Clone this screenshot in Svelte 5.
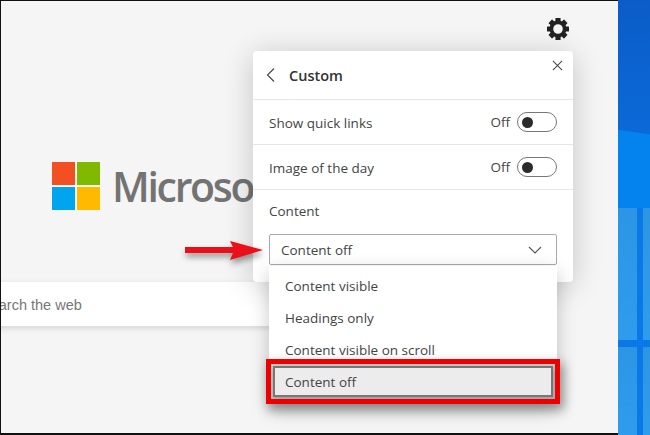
<script>
    const toggles = ["Show quick links", "Image of the day"];
    const options = ["Content visible", "Headings only", "Content visible on scroll", "Content off"];
    const teeth = [0, 45, 90, 135, 180, 225, 270, 315];
</script>

<div class="screen">
    <main class="browser">
        <div class="topbar">
            <svg class="gear" viewBox="0 0 24 24" width="24" height="24" aria-label="Settings">
                {#each teeth as angle}
                    <rect x="9.4" y="1" width="5.2" height="5" rx="0.6" fill="#222" transform="rotate({angle} 12 12)" />
                {/each}
                <circle cx="12" cy="12" r="6.6" fill="none" stroke="#222" stroke-width="3.6" />
            </svg>
        </div>

        <div class="brand">
            <div class="logo">
                <span class="red"></span>
                <span class="green"></span>
                <span class="blue"></span>
                <span class="yellow"></span>
            </div>
            <span class="wordmark">Microsoft</span>
        </div>

        <div class="search">Search the web</div>

        <section class="panel">
            <header>
                <svg class="back" viewBox="0 0 10 16" width="10" height="16">
                    <path d="M8 1.5 L1.5 8 L8 14.5" fill="none" stroke="#444" stroke-width="1.1" />
                </svg>
                <h2>Custom</h2>
                <svg class="close" viewBox="0 0 12 12" width="11" height="11">
                    <path d="M1 1 L11 11 M11 1 L1 11" stroke="#444" stroke-width="1.1" />
                </svg>
            </header>
            {#each toggles as label}
                <div class="row">
                    <span class="label">{label}</span>
                    <span class="state">Off</span>
                    <span class="switch"><i></i></span>
                </div>
            {/each}
            <div class="content">
                <div class="content-label">Content</div>
                <div class="select">
                    <span>Content off</span>
                    <svg viewBox="0 0 14 8" width="14" height="8">
                        <path d="M1 1 L7 7 L13 1" fill="none" stroke="#555" stroke-width="1.1" />
                    </svg>
                </div>
            </div>
        </section>

        <ul class="menu">
            {#each options as option, i}
                <li class:selected={i === options.length - 1}>{option}</li>
            {/each}
        </ul>

        <svg class="arrow" viewBox="0 0 80 28" width="80" height="28">
            <path d="M1 11 H49 L46 5 L79 14 L46 24 L49 17 H1 Z" fill="#ea0f18" />
        </svg>
    </main>

    <aside class="wallpaper">
        <div class="sky"></div>
        <div class="panes">
            <span></span><span></span>
            <span></span><span></span>
        </div>
    </aside>
</div>

<style>
    :global(body) {
        margin: 0;
        overflow: hidden;
    }

    .screen {
        display: flex;
        width: 650px;
        height: 435px;
        font-family: "Open Sans", "Noto Sans", sans-serif;
        color: #444;
    }

    .browser {
        position: relative;
        flex: 1;
        display: flex;
        flex-direction: column;
        background: #f5f5f5;
        border-top: 1px solid #111;
        border-left: 1px solid #111;
        border-bottom: 2px solid #111;
        overflow: hidden;
    }

    .topbar {
        display: flex;
        justify-content: flex-end;
        padding: 16px 48px 0 0;
        height: 29px;
    }

    .brand {
        display: flex;
        align-items: center;
        gap: 12px;
        margin: 116px 0 0 51px;
    }

    .logo {
        display: grid;
        grid-template-columns: 23px 23px;
        grid-template-rows: 23px 23px;
        gap: 2px;
    }

    .red { background: #f25022; }
    .green { background: #7fba00; }
    .blue { background: #00a4ef; }
    .yellow { background: #ffb900; }

    .wordmark {
        font-size: 41px;
        font-weight: 600;
        letter-spacing: -2.3px;
        line-height: 48px;
        color: #737373;
        white-space: nowrap;
    }

    .search {
        margin: 72px 0 0 -20px;
        width: 516px;
        height: 44px;
        background: #fff;
        box-shadow: 0 2px 6px rgba(0, 0, 0, 0.14);
        font-family: "Liberation Sans", sans-serif;
        font-size: 14.5px;
        line-height: 46px;
        color: #777;
    }

    .panel {
        position: absolute;
        left: 252px;
        top: 50px;
        width: 320px;
        height: 231px;
        background: #fff;
        border-radius: 4px;
        box-shadow: 0 4px 30px rgba(0, 0, 0, 0.2);
    }

    .panel header {
        position: relative;
        display: flex;
        align-items: center;
        gap: 13px;
        height: 49px;
        padding-left: 13px;
        box-sizing: border-box;
        border-bottom: 1px solid #e6e6e6;
    }

    h2 {
        margin: 0;
        font-size: 14.5px;
        font-weight: 600;
        color: #333;
    }

    .close {
        position: absolute;
        right: 10px;
        top: 9px;
    }

    .row {
        display: flex;
        align-items: center;
        height: 44px;
        padding: 0 16px;
        border-bottom: 1px solid #e6e6e6;
        font-size: 13.5px;
    }

    .label {
        flex: 1;
        padding-top: 2px;
    }

    .state {
        margin-right: 7px;
    }

    .switch {
        display: flex;
        align-items: center;
        width: 40px;
        height: 20px;
        padding-left: 4px;
        box-sizing: border-box;
        border: 1px solid #777;
        border-radius: 10px;
    }

    .switch i {
        width: 11px;
        height: 11px;
        border-radius: 50%;
        background: #2b2b2b;
    }

    .content {
        padding: 11px 16px 0;
        font-size: 13.5px;
    }

    .content-label {
        line-height: 20px;
        margin-bottom: 13px;
    }

    .select {
        display: flex;
        align-items: center;
        justify-content: space-between;
        height: 31px;
        padding: 0 14px 0 11px;
        box-sizing: border-box;
        border: 1px solid #aaa;
        border-radius: 2px;
    }

    .menu {
        position: absolute;
        left: 268px;
        top: 265px;
        width: 288px;
        margin: 0;
        padding: 5px 0 0;
        list-style: none;
        background: #fff;
        box-shadow: 0 6px 18px rgba(0, 0, 0, 0.22);
        font-size: 13.5px;
    }

    .menu li {
        height: 32px;
        line-height: 30px;
        padding-left: 16px;
    }

    /* red annotation round the last option */
    .menu li.selected {
        position: relative;
        margin: -1px 4px 7px 4px;
        height: 31px;
        line-height: 29px;
        padding-left: 10px;
        box-sizing: border-box;
        background: #ececec;
        border: 2px solid #777;
        outline: 5px solid #ee0000;
        outline-offset: 2px;
        box-shadow: 3px 5px 10px 8px rgba(0, 0, 0, 0.35);
    }

    .arrow {
        position: absolute;
        left: 183px;
        top: 235px;
        filter: drop-shadow(1px 4px 3px rgba(0, 0, 0, 0.4));
    }

    .wallpaper {
        width: 32px;
        display: flex;
        flex-direction: column;
        background: #0a80ee;
    }

    .sky {
        height: 208px;
        background:
            linear-gradient(188deg, transparent 0 63%, #0483ef 63.5% 100%),
            linear-gradient(180deg, #0b5cc8, #0a72e0);
    }

    .panes {
        flex: 1;
        display: grid;
        grid-template-columns: 19px 7px;
        grid-template-rows: 132px 1fr;
        column-gap: 6px;
        row-gap: 7px;
        background: #0a78e6;
    }

    .panes span {
        background: linear-gradient(180deg, #2c96e4, #2e9cec);
    }
</style>
